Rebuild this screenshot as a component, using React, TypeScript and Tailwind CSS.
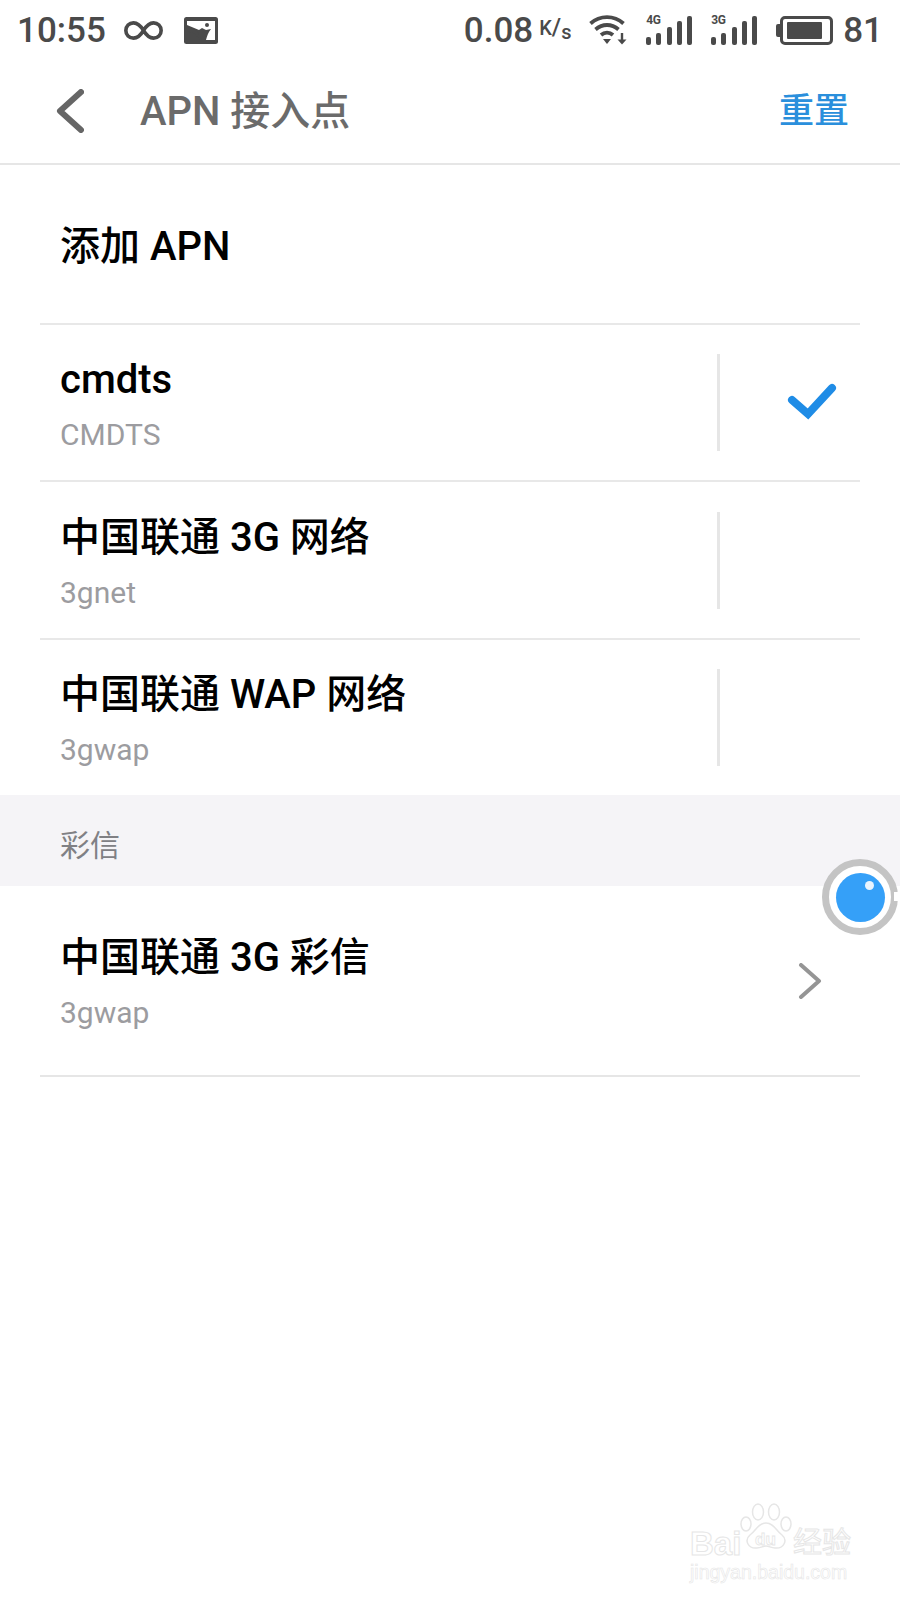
import React from "react";

const FONT = "font-['Roboto','Noto_Sans_CJK_SC',sans-serif]";

function Infinity8() {
  return (
    <svg width="41" height="21" viewBox="0 0 42 22" fill="none" stroke="#4a4a4a" strokeWidth="3.8">
      <path d="M21 11c-3-5-6-8-10.500-8C6 3 2.500 6.500 2.500 11s3.500 8 8 8C15 19 18 16 21 11c3-5 6-8 10.500-8 4.500 0 8 3.500 8 8s-3.500 8-8 8C27 19 24 16 21 11z" />
    </svg>
  );
}

function PictureIcon() {
  return (
    <svg width="34" height="27" viewBox="0 0 34 27">
      <rect width="34" height="27" rx="2.500" fill="#4a4a4a" />
      <path d="M3 4h28v19h-9c1-4 2-7 5-11l-5 1-4-2-3 2-12-5z" fill="#fff" />
      <path d="M3 9l10 5 5 9h-2l-5-6-8-3z" fill="#4a4a4a" />
      <circle cx="23" cy="8" r="2" fill="#4a4a4a" />
    </svg>
  );
}

function Wifi() {
  return (
    <svg width="40" height="32" viewBox="0 0 40 32" fill="none" stroke="#4a4a4a" strokeWidth="3.800">
      <path d="M1.500 9.500C11 1 25 1 34.500 9.500" />
      <path d="M6.500 15.500C13.500 9.500 22.500 9.500 29.500 15.500" />
      <path d="M12 21c3.500-3 8.500-3 12 0" />
      <path d="M14 25h8l-4 5z" fill="#4a4a4a" stroke="none" />
      <path d="M33 19v8" strokeWidth="2.400" />
      <path d="M28.500 25.500h9l-4.500 5z" fill="#4a4a4a" stroke="none" />
    </svg>
  );
}

function Signal({ label }: { label: string }) {
  return (
    <div className="relative w-[46px] h-[30px]">
      <span className={`absolute left-0 -top-[1px] text-[12px] leading-[12px] font-bold tracking-[-0.3px] text-[#4a4a4a] ${FONT}`}>{label}</span>
      <div className="absolute inset-0 flex items-end justify-between">
        <div className="w-[5px] h-[8px] rounded-[2px] bg-[#4a4a4a]" />
        <div className="w-[5px] h-[12px] rounded-[2px] bg-[#4a4a4a]" />
        <div className="w-[5px] h-[18px] rounded-[2px] bg-[#4a4a4a]" />
        <div className="w-[5px] h-[24px] rounded-[2px] bg-[#4a4a4a]" />
        <div className="w-[5px] h-[29px] rounded-[2px] bg-[#4a4a4a]" />
      </div>
    </div>
  );
}

function Battery() {
  return (
    <div className="flex items-center">
      <div className="w-[4px] h-[13px] rounded-l-[2px] bg-[#4a4a4a]" />
      <div className="w-[53px] h-[29px] rounded-[5px] border-[3px] border-[#4a4a4a] p-[3px]">
        <div className="h-full ml-[1px] w-[35px] bg-[#4a4a4a] rounded-[1px]" />
      </div>
    </div>
  );
}

function StatusBar() {
  return (
    <div className={`h-[60px] pl-[17px] pr-[17px] flex items-center text-[35px] font-medium text-[#4a4a4a] ${FONT}`}>
      <span className="leading-none">10:55</span>
      <div className="ml-[17px]"><Infinity8 /></div>
      <div className="ml-[20px]"><PictureIcon /></div>
      <span className="ml-auto leading-none">0.08</span>
      <span className="ml-[6px] w-[32px] text-[20px] leading-none -mt-[6px] whitespace-nowrap">K<span className="text-[24px]">/</span><span className="text-[20px] relative top-[4px]">s</span></span>
      <div className="ml-[18px]"><Wifi /></div>
      <div className="ml-[17px]"><Signal label="4G" /></div>
      <div className="ml-[19px]"><Signal label="3G" /></div>
      <div className="ml-[19px]"><Battery /></div>
      <span className="ml-[10px] leading-none">81</span>
    </div>
  );
}

function Header() {
  return (
    <div className={`h-[105px] pl-[56px] pr-[51px] flex items-center border-b-2 border-[#e6e6e6] ${FONT}`}>
      <svg width="28" height="44" viewBox="0 0 28 44" fill="none" stroke="#666" strokeWidth="6" strokeLinecap="round" strokeLinejoin="round" className="-mt-[1px]">
        <path d="M25 3 4 22l21 19" />
      </svg>
      <span className="ml-[56px] text-[40px] leading-none font-medium text-[#6b6b6b]">APN 接入点</span>
      <span className="ml-auto text-[35px] leading-none font-medium text-[#2a8fdc]">重置</span>
    </div>
  );
}

function ApnText({ title, sub }: { title: string; sub: string }) {
  return (
    <div className="pt-[4px]">
      <div className="text-[40px] leading-[48px] font-medium text-black">{title}</div>
      <div className="mt-[13px] text-[30px] leading-[36px] text-[#9c9ca0]">{sub}</div>
    </div>
  );
}

function ApnRow({ title, sub, checked, last, height }: { title: string; sub: string; checked?: boolean; last?: boolean; height: string }) {
  return (
    <div className={`${height} mx-[40px] pl-[20px] flex items-center justify-between ${last ? "" : "border-b-2 border-[#e8e8e8]"}`}>
      <ApnText title={title} sub={sub} />
      <div className="w-[143px] h-[97px] flex items-center justify-center border-l-[3px] border-[#e6e6e6]">
        {checked && (
          <svg width="50" height="40" viewBox="0 0 50 40" fill="none" stroke="#1f8ce6" strokeWidth="8" strokeLinecap="round" className="ml-[44px] -mt-[2px]">
            <path d="M5 18l16 14L45 6" />
          </svg>
        )}
      </div>
    </div>
  );
}

function FloatBall() {
  return (
    <div className="absolute left-[822px] top-[859px] w-[76px] h-[76px] rounded-full border-[7px] border-[#c4c4c4] bg-white flex items-center justify-center">
      <div className="relative w-[49px] h-[49px] rounded-full bg-[#35a0f8]">
        <div className="absolute left-[29px] top-[8px] w-[9px] h-[9px] rounded-full bg-[#e9f4fe]" />
      </div>
      <div className="absolute -right-[7px] top-[26px] w-[4px] h-[9px] bg-white" />
    </div>
  );
}

function Watermark() {
  return (
    <div className="absolute left-[688px] top-[1500px] w-[170px] h-[82px] text-transparent font-['Liberation_Sans','Noto_Sans_CJK_SC',sans-serif]">
      <span className="absolute left-[2px] top-[26px] text-[33px] leading-[36px] font-bold [-webkit-text-stroke:1px_#e6e6e6]">Bai</span>
      <svg width="56" height="50" viewBox="0 0 56 50" fill="none" stroke="#e6e6e6" strokeWidth="1.500" className="absolute left-[50px] top-[2px]">
        <ellipse cx="20" cy="10" rx="5.500" ry="8" />
        <ellipse cx="36" cy="10" rx="5.500" ry="8" />
        <ellipse cx="8" cy="22" rx="5" ry="7" />
        <ellipse cx="48" cy="22" rx="5" ry="7" />
        <path d="M28 21c8 0 10 8 16 12 6 5 2 14-7 13-4 0-6-2-9-2s-5 2-9 2c-9 1-13-8-7-13 6-4 8-12 16-12z" />
      </svg>
      <span className="absolute left-[67px] top-[31px] text-[17px] leading-[18px] font-bold [-webkit-text-stroke:0.8px_#e6e6e6]">du</span>
      <span className="absolute left-[105px] top-[27px] text-[29px] leading-[32px] whitespace-nowrap [-webkit-text-stroke:1px_#e6e6e6]">经验</span>
      <span className="absolute left-[2px] top-[62px] text-[19.500px] leading-[20px] whitespace-nowrap [-webkit-text-stroke:0.6px_#e6e6e6]">jingyan.baidu.com</span>
    </div>
  );
}

export default function App() {
  return (
    <div className={`relative h-[1600px] w-[900px] overflow-hidden bg-white ${FONT}`}>
      <StatusBar />
      <Header />

      {/* 列表 */}
      <div className="h-[160px] mx-[40px] pl-[20px] flex items-center border-b-2 border-[#e8e8e8]">
        <span className="text-[40px] leading-none font-medium text-black mt-[5px]">添加 APN</span>
      </div>
      <ApnRow height="h-[157px]" title="cmdts" sub="CMDTS" checked />
      <ApnRow height="h-[158px]" title="中国联通 3G 网络" sub="3gnet" />
      <ApnRow height="h-[155px]" title="中国联通 WAP 网络" sub="3gwap" last />

      <div className="h-[91px] pl-[60px] pt-[10px] flex items-center bg-[#f5f4f7] text-[30px] text-[#808084]">彩信</div>

      <div className="h-[191px] mx-[40px] pl-[20px] pr-[38px] flex items-center justify-between border-b-2 border-[#e6e6e6]">
        <ApnText title="中国联通 3G 彩信" sub="3gwap" />
        <svg width="24" height="36" viewBox="0 0 24 36" fill="none" stroke="#959595" strokeWidth="4" strokeLinecap="round" strokeLinejoin="round">
          <path d="M3 2l18 16L3 34" />
        </svg>
      </div>

      <FloatBall />
      <Watermark />
    </div>
  );
}
